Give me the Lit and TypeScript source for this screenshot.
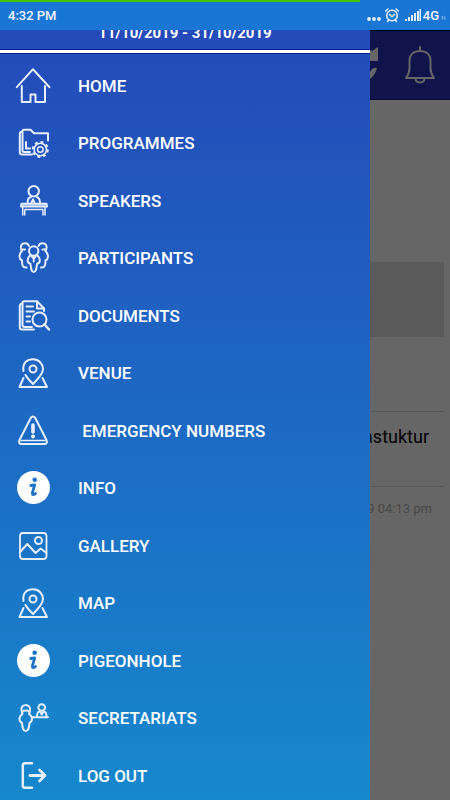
import { LitElement, html, svg, css, SVGTemplateResult } from "lit";
import { customElement, property } from "lit/decorators.js";

const pin = svg`
  <path d="M10.500 18C9 9 15 6.200 20 6.200C26 6.200 30 11 30 16C30 21 24 27 20 31C17 28 14 25 12.500 22"/>
  <circle cx="20" cy="16" r="3.500"/>
  <path d="M10.500 25L6.500 34H34L29.500 25"/>`;

const info = svg`
  <circle cx="20.500" cy="19.500" r="16.500" fill="#fff" stroke="none"/>
  <circle cx="21.700" cy="11.700" r="2.300" fill="#1b74c9" stroke="none"/>
  <path d="M17.800 17.500L21.700 16.800L19.500 24.500C19 27.200 20.500 27.200 22.500 25.500" stroke="#1b74c9" stroke-width="2.800"/>`;

const icons: Record<string, SVGTemplateResult> = {
  home: svg`
    <path d="M3.800 21.200L20 3.200L36.500 21.200"/>
    <path d="M8.800 20V36H17.500V28.500H22.500V36H32V20"/>`,
  programmes: svg`
    <path d="M19 31.500H9C7.500 31.500 6.800 30.500 6.800 29V11C6.800 9.500 7.500 8.800 9 8.500"/>
    <path d="M17 29H11C10 29 9.500 28.500 9.500 27.500V8C9.500 7 10 6.700 11 6.700H17.500L21 10.200H35V17.500"/>
    <path d="M13 19V25.500H17"/>
    <circle cx="27.300" cy="26.500" r="6.200" stroke-width="1.600"/>
    <circle cx="27.300" cy="26.500" r="7.500" stroke-width="2" stroke-dasharray="2.900 3" stroke-linecap="butt"/>
    <circle cx="27.300" cy="26.500" r="2.800" stroke-width="1.500"/>`,
  speakers: svg`
    <circle cx="20.700" cy="10.200" r="5.200"/>
    <path d="M14.500 22C14.500 18.500 16 16.500 18 16M27 22C27 18.500 25.500 16.500 23.500 16M18.500 21.500L20 18.500L21.500 21.500"/>
    <path d="M8.500 22.800H33.500L34 25.500H8Z" fill="#ffffff66"/>
    <path d="M9.700 26V34.500M11.700 28.500V34.500M11.700 28.500H30M30 28.500V34.500M32 26V34.500" stroke-width="1.500" stroke-linecap="butt"/>`,
  participants: svg`
    <path d="M8.500 12C6.500 8 9 5.300 12 5.300C14 5.300 15.500 6.500 16 8M33 12C35 8 32.500 5.300 29.500 5.300C27.500 5.300 26 6.500 25.500 8"/>
    <path d="M8.500 11.500H12M8.800 13C5.500 17 6 21 9 22.500C9 27 9.500 30 13.500 29.500M33 11.500H29.500M32.600 13C36 17 35.500 21 32.500 22.500C32.500 27 32 30 28 29.500"/>
    <circle cx="20.700" cy="13" r="4.700"/>
    <path d="M17.500 17C13 21 14.500 25 17.500 26C18 31 18.500 34 20.700 34C23 34 23.500 31 24 26C27 25 28.500 21 24 17"/>
    <path d="M20.700 18V23.500M18.800 18.500L20.700 20.500L22.600 18.500"/>`,
  documents: svg`
    <path d="M21 33.500H9C7.500 33.500 6.800 32.500 6.800 31V10C6.800 8.500 7.500 7.800 9 7.500"/>
    <path d="M19 31H11.500C10 31 9.500 30.500 9.500 29V7C9.500 5.500 10 5.200 11 5.200H24L31 12.500V15"/>
    <path d="M24 5.500V12.500H31"/>
    <path d="M13.500 10.500H20M13.500 15.500H21M13.500 20.500H17M13.500 25.500H17"/>
    <circle cx="26.500" cy="23.500" r="7"/>
    <path d="M31.500 28.500L36 33.500" stroke-width="2.500"/>`,
  pin,
  emergency: svg`
    <path d="M18 6.500C19 5 21 5 22 6.500L33.500 29C34.500 31.500 33.500 33 31.500 33H8.500C6.500 33 5.500 31.500 6.500 29Z"/>
    <path d="M8 29.500H32" stroke-width="1.500"/>
    <path d="M20 14V21" stroke-width="3.600"/>
    <circle cx="20" cy="25.500" r="1.900" fill="#fff" stroke="none"/>`,
  info,
  gallery: svg`
    <rect x="7" y="7" width="26.500" height="26" rx="3" stroke-width="1.800"/>
    <circle cx="25.500" cy="14.500" r="3.500"/>
    <path d="M7 26L14.300 18L22.500 27L27.700 22.500L33.500 27"/>`,
  secretariats: svg`
    <path d="M9 14.500C7 10 9.500 7 12.700 7C16 7 18.500 10 16.500 14.500"/>
    <path d="M9 13.500C11 12 14.500 12 16.500 13.500L16 16C20.500 19 19.500 23.500 16.500 25C16 30 15.500 33 12.700 33C10 33 9.500 30 9 25C6 23.500 5 19 9.500 16Z"/>
    <circle cx="28.700" cy="9.500" r="3.300"/>
    <path d="M24 18.500C24 15 25.500 13.500 27 13.500L28.700 16.500L30.500 13.500C32.500 13.500 33.500 15 33.500 18.500M19 19.300H35"/>`,
  logout: svg`
    <path d="M19 7.200H12C10.500 7.200 9.800 8 9.800 9.500V29.500C9.800 31 10.500 31.800 12 31.800H19" stroke-width="2.500"/>
    <path d="M17 19.500H32M26.500 14L32 19.500L26.500 25" stroke-width="2.800"/>`,
};

const items = [
  ["home", "HOME"],
  ["programmes", "PROGRAMMES"],
  ["speakers", "SPEAKERS"],
  ["participants", "PARTICIPANTS"],
  ["documents", "DOCUMENTS"],
  ["pin", "VENUE"],
  ["emergency", " EMERGENCY NUMBERS"],
  ["info", "INFO"],
  ["gallery", "GALLERY"],
  ["pin", "MAP"],
  ["info", "PIGEONHOLE"],
  ["secretariats", "SECRETARIATS"],
  ["logout", "LOG OUT"],
];

@customElement("menu-item")
export class MenuItem extends LitElement {
  @property() icon = "home";
  @property() label = "";

  static styles = css`
    :host { display: flex; }
    a {
      flex: 1;
      display: flex;
      align-items: center;
      gap: 25px;
      padding-left: 13px;
      color: #fff;
      font-size: 17px;
      line-height: 24px;
      font-weight: 500;
      text-decoration: none;
      white-space: pre;
    }
    svg {
      width: 40px;
      height: 40px;
      flex: none;
      fill: none;
      stroke: #e6effc;
      stroke-width: 2;
      stroke-linejoin: round;
      stroke-linecap: round;
    }
  `;

  render() {
    return html`<a href="#${this.icon}"
      ><svg viewBox="0 0 40 40" aria-hidden="true">${icons[this.icon]}</svg
      ><span>${this.label}</span></a
    >`;
  }
}

@customElement("app-root")
export class AppRoot extends LitElement {
  static styles = css`
    :host {
      display: flex;
      flex-direction: column;
      height: 100vh;
      font-family: Roboto, "Liberation Sans", sans-serif;
      background: #fff;
    }
    * { box-sizing: border-box; }
    .status {
      display: flex;
      align-items: center;
      justify-content: space-between;
      height: 30px;
      padding: 0 4px 0 8px;
      background: linear-gradient(#45c400, #45c400) 0 0 / 80% 2px no-repeat #1976d4;
      color: #f2f7fd;
      font-size: 13px;
      font-weight: 500;
      flex: none;
    }
    .tray { display: flex; align-items: center; gap: 2px; }
    .tray svg { fill: #e6f0fb; stroke: none; }
    .stage {
      position: relative;
      flex: 1;
      min-height: 0;
      overflow: hidden;
    }
    .bar {
      display: flex;
      align-items: center;
      justify-content: flex-end;
      gap: 22px;
      height: 70px;
      padding-right: 10px;
      background: #2832b9;
      border-top: 1px solid #000;
      border-bottom: 1px solid #1c248c;
    }
    button {
      display: flex;
      padding: 0;
      border: 0;
      background: none;
      color: #fff;
    }
    .content { padding: 162px 6px 0; }
    .banner { height: 75px; background: #e1e1e1; }
    .entry {
      height: 76px;
      margin: 74px 0 0;
      padding: 12px 15px 0;
      border-top: 1px solid #ddd;
      border-bottom: 1px solid #ddd;
      color: #000;
      font-size: 18px;
      line-height: 26px;
      font-weight: 400;
      text-align: right;
    }
    .time {
      margin: 12px 12px 0;
      color: #b4b4b4;
      font-size: 13px;
      line-height: 20px;
      text-align: right;
    }
    .scrim {
      position: absolute;
      inset: 0;
      background: rgba(0, 0, 0, 0.6);
    }
    .drawer {
      position: absolute;
      inset: 0 80px 0 0;
      overflow: hidden;
      background: linear-gradient(#244ab9, #1688cd);
    }
    .head {
      display: flex;
      flex-direction: column;
      justify-content: flex-end;
      height: 19px;
      overflow: hidden;
      color: #fff;
      font-size: 15px;
      line-height: 20px;
      font-weight: 700;
      text-align: center;
    }
    .head p { margin: 0; padding-bottom: 6px; flex: none; }
    .rule {
      height: 5px;
      background: #fff;
      border: solid #0c1f9c;
      border-width: 1px 0;
    }
    ul { margin: 3px 0 0; padding: 0; list-style: none; }
    menu-item { height: 57px; }
    li:nth-child(even) menu-item { height: 58px; }
  `;

  render() {
    return html`
      <div class="status">
        <span>4:32 PM</span>
        <div class="tray">
          <svg width="54" height="18" viewBox="2 0 54 18" aria-hidden="true">
            <circle cx="4" cy="13" r="1.900" /><circle cx="9" cy="13" r="1.900" /><circle cx="14" cy="13" r="1.900" />
            <g fill="none" stroke="#e6f0fb" stroke-width="1.500" stroke-linecap="round">
              <circle cx="27" cy="9.500" r="5.300" />
              <path d="M24.500 8.500L27 10.800L29.500 8.500M20.800 5L23 3M33.200 5L31 3M23.500 14L22.500 15.500M30.500 14L31.500 15.500" />
            </g>
            <path d="M40 13h2v2h-2zM43 11h2v4h-2zM46 9h2v6h-2zM49 7h2v8h-2zM52 5h2v10h-2zM54.500 3h1.500v12h-1.500z" />
          </svg>
          <span>4G</span>
          <svg width="5" height="18" viewBox="1 0 6 18" aria-hidden="true" opacity="0.500">
            <path d="M2.500 10L4 12H3V15H2V12H1ZM5.500 15L4 13H5V10H6V13H7Z" />
          </svg>
        </div>
      </div>
      <div class="stage">
        <header class="bar">
          <button aria-label="Refresh">
            <svg width="32" height="40" viewBox="0 0 32 40" fill="currentColor">
              <path d="M32 2V16H18L22 8C14 4 6 9 5 17H0C1 4 15 0 26 6ZM31 23C28 36 14 41 5 33L0 38V24H13L9 29C15 34 22 31 26 24Q29 22 31 23Z" />
            </svg>
          </button>
          <button aria-label="Notifications">
            <svg width="40" height="40" viewBox="0 0 40 40" fill="none" stroke="currentColor" stroke-width="2" stroke-linejoin="round" stroke-linecap="round">
              <path d="M20 2V5.500M6 33C9 29 9.500 27 9.500 23V16C9.500 9.500 14 6 20 6C26 6 30.500 9.500 30.500 16V23C30.500 27 31 29 34 33Z" />
              <path d="M15.500 34C16 38.500 24 38.500 24.500 34" />
            </svg>
          </button>
        </header>
        <main class="content">
          <div class="banner"></div>
          <p class="entry">astuktur</p>
          <p class="time">9 04:13 pm</p>
        </main>
        <div class="scrim"></div>
        <aside class="drawer">
          <div class="head"><p>11/10/2019 - 31/10/2019</p></div>
          <div class="rule"></div>
          <nav>
            <ul>
              ${items.map(([icon, label]) => html`<li><menu-item icon=${icon} label=${label}></menu-item></li>`)}
            </ul>
          </nav>
        </aside>
      </div>
    `;
  }
}
